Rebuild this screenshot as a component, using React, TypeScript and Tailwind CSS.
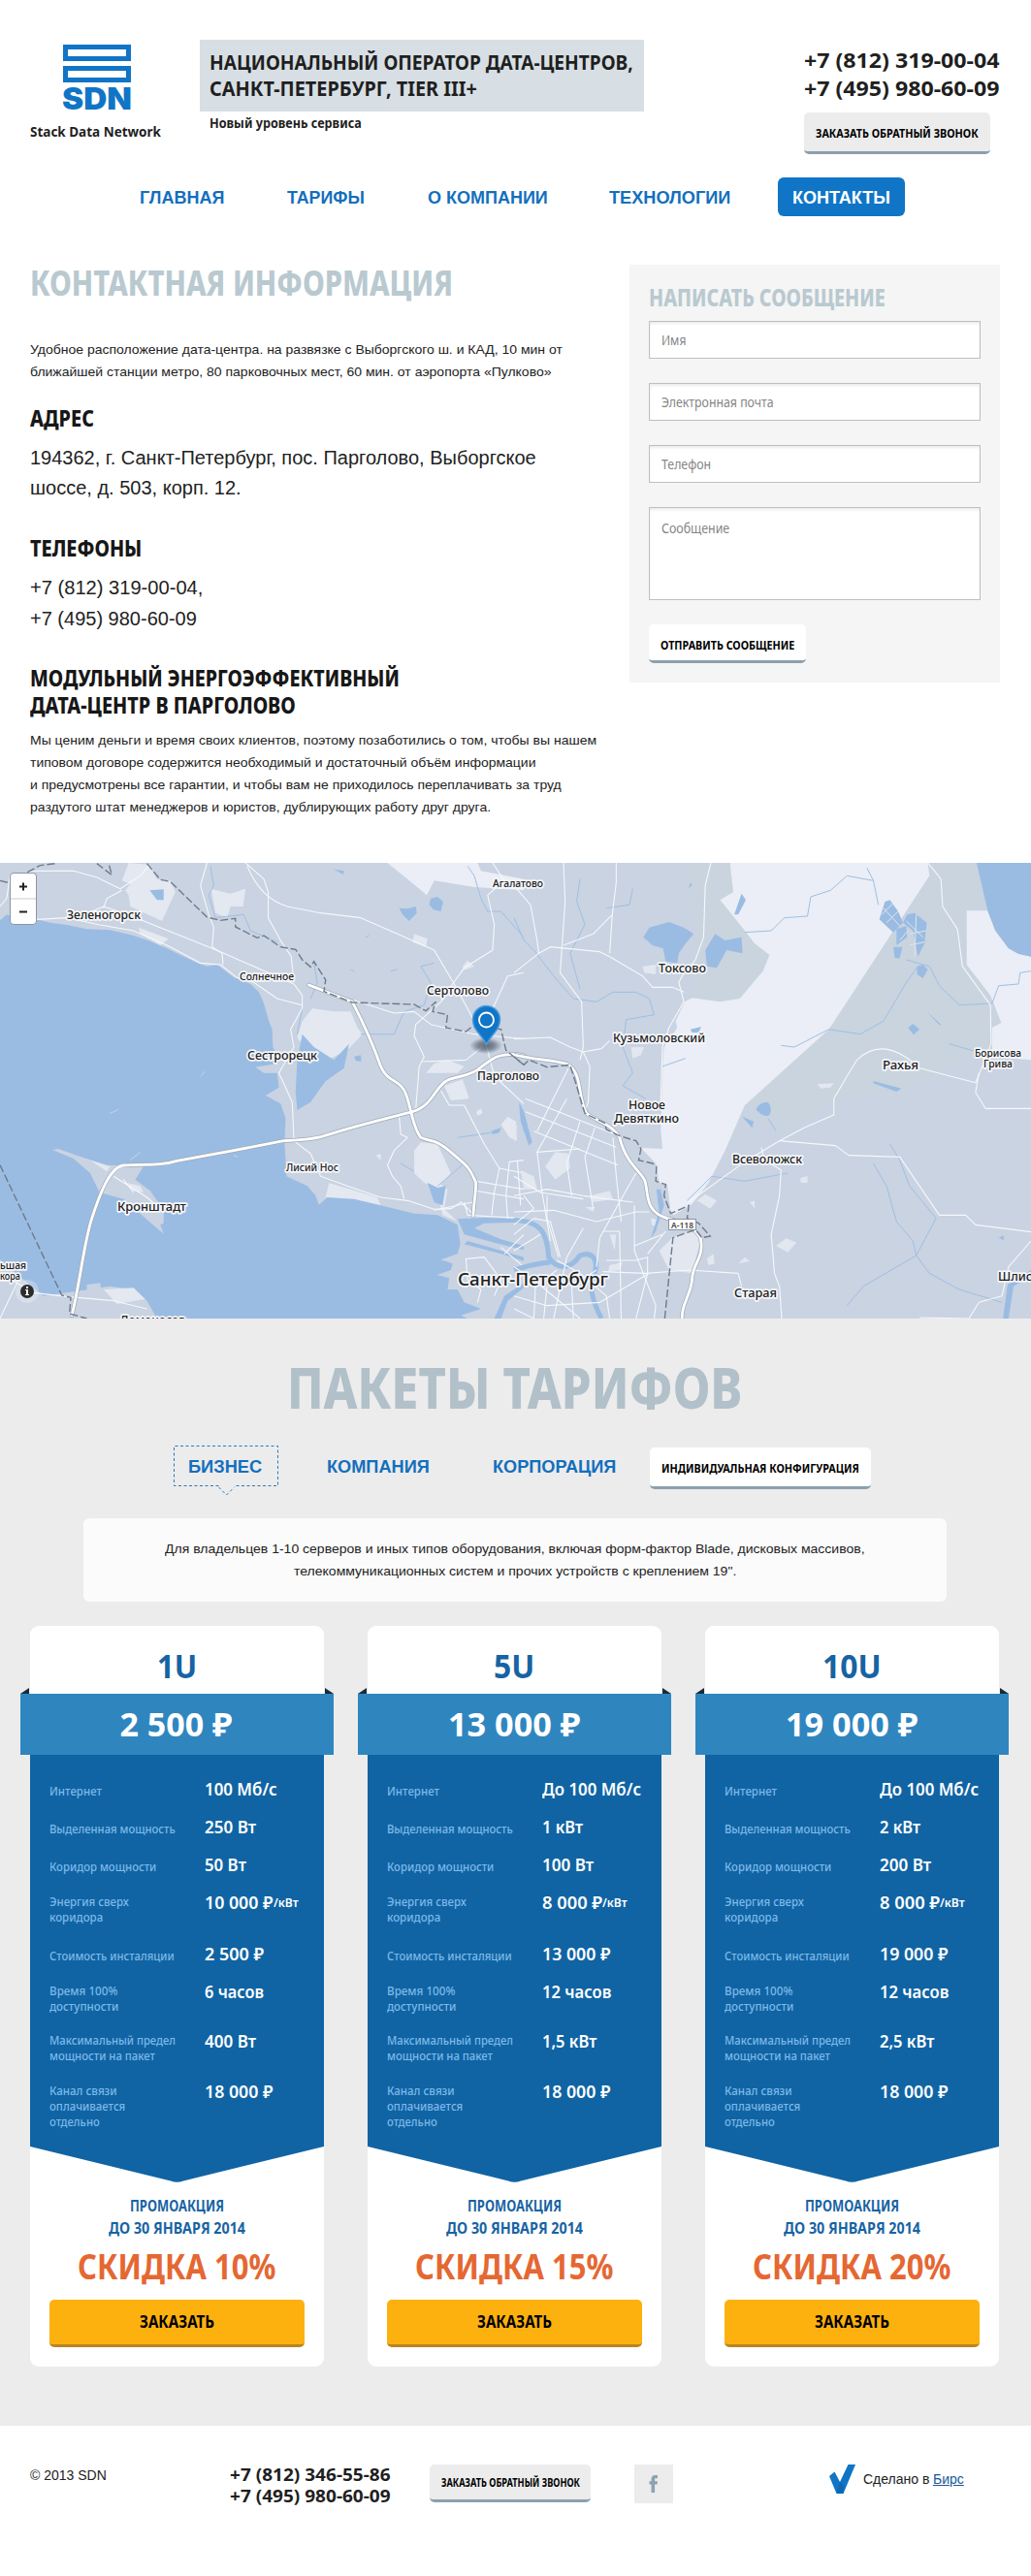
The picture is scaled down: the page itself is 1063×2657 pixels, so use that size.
import { useLayoutEffect, useRef, useState, type ReactNode } from "react";

/* One line of text condensed or stretched to a given width. */
function Fit({ w, className = "", children }: { w: number; className?: string; children: ReactNode }) {
  const ref = useRef<HTMLSpanElement>(null);
  const [k, setK] = useState(1);
  useLayoutEffect(() => {
    if (ref.current) setK(w / ref.current.offsetWidth);
  }, [w]);
  return (
    <span className={`inline-block whitespace-nowrap text-left align-top ${className}`} style={{ width: w }}>
      <span ref={ref} className="block w-max origin-left" style={{ transform: `scaleX(${k})` }}>
        {children}
      </span>
    </span>
  );
}

function Lines({ items, className = "" }: { items: [string, number][]; className?: string }) {
  return (
    <div className={`flex flex-col ${className}`}>
      {items.map(([t, w]) => (
        <Fit key={t} w={w}>{t}</Fit>
      ))}
    </div>
  );
}

const pt = "font-['Noto_Sans',sans-serif]";

function Header() {
  return (
    <header className={`flex h-[183px] items-start pl-[31px] pr-[32px] ${pt} text-[#1f1f1f]`}>
      <div className="w-[135px] pt-[46px]">
        <svg className="ml-[34px] block overflow-visible" width="70" height="67" viewBox="0 0 70 67">
          <path fill="none" stroke="#1075c6" strokeWidth="5" d="M2.5 2.5h65v12h-65zM2.5 24.5h65v12h-65z" />
          <text x="-1" y="66.8" fontFamily="Inter" fontWeight="900" fontSize="31" fill="#1075c6" textLength="72" lengthAdjust="spacingAndGlyphs">SDN</text>
        </svg>
        <Fit w={135} className="mt-[12px] text-[15px] font-bold leading-[20px]">Stack Data Network</Fit>
      </div>
      <div className="ml-[40px] mt-[41px] w-[458px]">
        <Lines
          className="h-[74px] bg-[#d7dfe4] pl-[10px] pt-[9px] text-[22px] font-bold leading-[27px]"
          items={[["НАЦИОНАЛЬНЫЙ ОПЕРАТОР ДАТА-ЦЕНТРОВ,", 437], ["САНКТ-ПЕТЕРБУРГ, TIER III+", 276]]}
        />
        <Fit w={157} className="ml-[10px] mt-[2px] text-[14px] font-bold leading-[20px]">Новый уровень сервиса</Fit>
      </div>
      <div className="ml-auto w-[202px] pt-[47px]">
        <Lines
          className="text-[22px] font-bold leading-[29px]"
          items={[["+7 (812) 319-00-04", 201], ["+7 (495) 980-60-09", 201]]}
        />
        <button className="mt-[11px] flex h-[43px] w-[192px] rounded-[5px] border-b-[3px] border-[#8ba0ad] bg-[#ececec] pl-[12px] pt-[11px] text-[13px] font-bold leading-[20px] text-black">
          <Fit w={168}>ЗАКАЗАТЬ ОБРАТНЫЙ ЗВОНОК</Fit>
        </button>
      </div>
    </header>
  );
}

function Nav() {
  return (
    <nav className="flex h-[40px] pl-[144px] font-['Liberation_Sans',Arial,sans-serif] text-[18px] font-bold leading-[42px] text-[#136fbd]">
      <Fit w={87}>ГЛАВНАЯ</Fit>
      <Fit w={80} className="ml-[65px]">ТАРИФЫ</Fit>
      <Fit w={124} className="ml-[65px]">О КОМПАНИИ</Fit>
      <Fit w={125} className="ml-[63px]">ТЕХНОЛОГИИ</Fit>
      <a className="ml-[49px] h-[40px] w-[131px] rounded-[6px] bg-[#1075c6] pl-[15px] text-white">
        <Fit w={101}>КОНТАКТЫ</Fit>
      </a>
    </nav>
  );
}

function Contacts() {
  const arial = "font-['Liberation_Sans',Arial,sans-serif] text-[#222]";
  const h2 = `${pt} relative top-px text-[22.5px] font-extrabold leading-[27.7px] text-[#171717]`;
  const field = "mb-[25px] h-[39px] w-[342px] border border-[#bfbfbf] bg-white pl-[12px] pt-[9px] text-[14px] leading-[20px] text-[#858585] shadow-[inset_0_2px_3px_rgba(0,0,0,0.08)]";
  return (
    <main className="flex h-[667px] items-start justify-between pl-[31px] pr-[32px] pt-[50px]">
      <div className="-mt-[2px]">
        <h1 className={`${pt} text-[35.5px] font-extrabold leading-[40px] text-[#b9c9d0]`}>
          <Fit w={436}>КОНТАКТНАЯ ИНФОРМАЦИЯ</Fit>
        </h1>
        <Lines
          className={`${arial} mt-[38px] text-[13.5px] leading-[23px]`}
          items={[
            ["Удобное расположение дата-центра. на развязке с Выборгского ш. и КАД, 10 мин от", 549],
            ["ближайшей станции метро, 80 парковочных мест, 60 мин. от аэропорта «Пулково»", 537],
          ]}
        />
        <h2 className={`${h2} mt-[22px]`}><Fit w={66}>АДРЕС</Fit></h2>
        <Lines
          className={`${arial} mt-[12px] text-[20px] leading-[31.7px]`}
          items={[["194362, г. Санкт-Петербург, пос. Парголово, Выборгское", 522], ["шоссе, д. 503, корп. 12.", 218]]}
        />
        <h2 className={`${h2} mt-[31px]`}><Fit w={115}>ТЕЛЕФОНЫ</Fit></h2>
        <Lines
          className={`${arial} mt-[12px] text-[20px] leading-[31.7px]`}
          items={[["+7 (812) 319-00-04,", 178], ["+7 (495) 980-60-09", 172]]}
        />
        <h2 className={`${h2} mt-[31px]`}>
          <Lines items={[["МОДУЛЬНЫЙ ЭНЕРГОЭФФЕКТИВНЫЙ", 381], ["ДАТА-ЦЕНТР В ПАРГОЛОВО", 274]]} />
        </h2>
        <Lines
          className={`${arial} mt-[11px] text-[13.5px] leading-[23px]`}
          items={[
            ["Мы ценим деньги и время своих клиентов, поэтому позаботились о том, чтобы вы нашем", 584],
            ["типовом договоре содержится необходимый и достаточный объём информации", 522],
            ["и предусмотрены все гарантии, и чтобы вам не приходилось переплачивать за труд", 548],
            ["раздутого штат менеджеров и юристов, дублирующих работу друг друга.", 475],
          ]}
        />
      </div>
      <form className={`h-[431px] w-[382px] bg-[#f5f5f5] pl-[20px] pt-[16px] ${pt}`}>
        <h3 className="mb-[8px] h-[34px] text-[24px] font-extrabold leading-[35px] text-[#b9c9d0]">
          <Fit w={244}>НАПИСАТЬ СООБЩЕНИЕ</Fit>
        </h3>
        <div className={field}><Fit w={25}>Имя</Fit></div>
        <div className={field}><Fit w={116}>Электронная почта</Fit></div>
        <div className={field}><Fit w={51}>Телефон</Fit></div>
        <div className={`${field} min-h-[96px] pt-[11px]`}><Fit w={70}>Сообщение</Fit></div>
        <button type="button" className="flex h-[40px] w-[162px] rounded-[5px] border-b-[3px] border-[#8ba0ad] bg-white pl-[12px] pt-[11px] text-[13px] font-bold leading-[20px] text-black">
          <Fit w={138}>ОТПРАВИТЬ СООБЩЕНИЕ</Fit>
        </button>
      </form>
    </main>
  );
}

function Label({ x, y, w, s, children }: { x: number; y: number; w: number; s: number; children: string }) {
  return (
    <text x={x} y={y} fontSize={s} textLength={w} lengthAdjust="spacingAndGlyphs" fontFamily="Noto Sans" fontWeight="500" fill="#222" stroke="#f4f6fa" strokeWidth="3.5" strokeLinejoin="round" paintOrder="stroke">
      {children}
    </text>
  );
}

const roadsWest = [
  "M0,165 L20,140 L30,70 L110,55 L220,55 L290,75 L360,110 L420,70 L445,40",
  "M110,205 L200,200 L300,222 L400,240 L500,285 L600,340 L660,345 L710,385 L760,400 L830,450 L905,470",
  "M240,195 L310,165 L370,185 L540,255 L660,305 L880,405 L905,440",
  "M620,30 L600,100 L625,190 L640,230 L635,290 L665,310 L668,345",
  "M365,115 L320,140 L310,170",
  "M735,30 L790,80 L803,120 L803,200 L840,270 L872,320 L880,400",
  "M740,40 Q780,140 860,165 L960,185 L1080,200 L1180,245 L1300,300 L1320,335 L1360,405 L1410,500 L1455,590",
  "M1475,30 L1510,85 L1460,130 L1480,220 L1475,300 L1390,355 L1355,405 L1320,460 L1245,530 L1240,565 L1270,630 L1255,660 L1245,790",
  "M1568,370 L1520,380 L1480,470 L1455,590 L1395,640 L1265,645",
  "M1060,455 L1180,495 L1240,490 L1290,530 L1420,560 L1568,575",
  "M905,440 L905,480 L870,545 L880,600 L835,680 L875,770 L880,890 L930,930 L960,1000 L1040,1030 L1140,1065 L1220,1075 L1300,1102 L1350,1100 L1380,1080 L1415,1115",
  "M1195,815 L1200,870 L1220,880 L1180,920 L1160,965 L1175,1000 L1200,1030 L1210,1070",
  "M1455,590 L1480,690 L1568,775",
  "M1320,735 L1345,780 L1390,780 L1450,900 L1495,975 L1568,990",
  "M1495,975 L1480,1050 L1472,1120 M1525,955 L1515,1060 L1520,1130 M1425,1015 L1568,1040 M1425,1045 L1568,1070 M1525,955 L1568,950",
  "M1300,1105 L1415,1080 M1390,1080 L1400,1120 L1568,1130",
  "M340,1000 L440,1065 L490,1110 M370,1010 L400,1050",
  "M0,1300 L100,1360 L200,1372 L340,1385 L440,1410 M60,1310 L0,1440",
  "M1395,1255 L1400,1320 L1440,1350 L1430,1390 M1395,1255 L1450,1250 L1500,1320 L1480,1370 M1500,1220 L1568,1280 M1568,1180 L1510,1240",
];
const roadsEast = [
  "M150,30 L155,150 L140,370 L205,460 L210,600 L200,640",
  "M0,100 L50,160 L70,270 L75,310 L0,370 M75,310 L110,290 L260,305 L290,320 L390,380 L420,415 L480,415 L515,430",
  "M310,30 L310,90 L298,190 L290,310 M298,190 L240,250 L150,285",
  "M597,30 L580,100 L575,260 L550,330 L510,380 L500,400 L515,460 L470,540 L450,600 L445,770",
  "M0,575 L110,570 L170,600 L210,615 L265,605 L290,580",
  "M170,655 L70,860 M210,615 L230,660 L225,770 L215,800",
  "M1255,30 L1295,80 L1300,165 L1345,235 L1360,350 L1445,470 L1447,590 L1420,660 L1400,710 L1230,665 Q1120,560 1040,640 L1010,690 L970,760 L970,810 L880,850 L805,890 L700,955 L530,1080",
  "M1410,680 L1400,740 L1430,790 L1568,790",
  "M805,890 L975,905 L1015,935 L1170,940 L1290,1120 L1370,1120 L1400,1150 L1568,1172",
  "M750,910 L760,950 L810,980 L805,1060 L780,1180 L790,1300 L805,1340 L812,1440",
  "M1568,1200 L1500,1280 L1480,1370 L1410,1390 L1380,1440 L1230,1437",
  "M270,1295 L400,1300 L530,1290 L680,1300 L690,1340",
];
const cityGrid = [
  "M35,760 L330,880 M35,800 L310,910 M60,860 L315,965 M70,925 L200,915 M0,1000 L80,1050 L210,1070",
  "M160,760 L70,925 L85,1050 L110,1200 M200,830 L160,960 L175,1060 M245,850 L215,940 L240,1100 M300,880 L310,1000 L325,1140",
  "M0,1060 L100,1040 L210,1060 L360,1080 M370,990 L320,1080 L260,1190 L250,1280 M0,1110 L120,1105 L250,1140 L370,1110 L410,1110",
  "M365,1090 L365,1230 L430,1400 L425,1440 M270,1170 L320,1170 L325,1440 M210,1160 L160,1250 L120,1440",
  "M405,1240 L460,1170 M365,1215 L450,1180 M0,1180 L60,1130 L110,1140 L140,1250 M0,1230 L80,1180",
  "M60,1440 L65,1340 L130,1290 M90,1440 L100,1340 M0,1370 L100,1400 L260,1390 L410,1300 M180,1440 L175,1340 L250,1290 M0,1410 L60,1440",
  "M280,1260 L370,1260 L405,1250 L405,1300 L370,1440 M100,1060 L100,1130 L135,1250 M30,1060 L60,1100 L0,1150 M10,950 L20,1090",
  "M0,1280 L60,1320 L130,1380 L200,1440 M130,1260 L200,1300 L280,1370 L290,1440",
];

function MapView() {
  return (
    <section className="relative h-[470px] overflow-hidden">
      <svg className="block" width="1063" height="470" viewBox="0 0 1063 470">
        <defs>
          <radialGradient id="pinShadow">
            <stop offset="0" stopColor="#4b5563" stopOpacity="0.85" />
            <stop offset="0.5" stopColor="#4b5563" stopOpacity="0.6" />
            <stop offset="1" stopColor="#4b5563" stopOpacity="0" />
          </radialGradient>
        </defs>
        <rect width="1063" height="470" fill="#c9d3e2" />
        <g transform="translate(0,-10) scale(0.34436,0.33333)">
          <g fill="#e3e8f1">
            <path d="M1160,30 L1220,80 L1278,130 L1300,85 L1420,105 L1568,115 L1568,80 L1440,55 L1430,30Z" fill="#ebeef6" />
            <path d="M385,30 L445,35 L470,80 L510,85 L525,120 L485,210 L390,165 L385,130 L375,115 L390,95 L365,85Z" />
            <path d="M632,110 L690,125 L735,110 L728,165 L690,165 L680,200 L645,185Z" />
            <path d="M415,230 L505,265 L480,285 L420,250Z M1240,250 L1280,265 L1275,290 L1235,275Z M1385,350 L1400,332 L1420,350 L1390,362Z" />
            <path d="M905,520 L935,480 L1000,490 L1050,490 L1070,540 L1085,560 L1040,610 L980,640 L910,600 L890,570Z" />
            <path d="M1330,720 L1385,700 L1405,760 L1350,765Z M1300,650 L1340,640 L1390,660 L1370,680 L1275,680Z" />
            <path d="M1240,920 L1260,895 L1310,900 L1350,990 L1310,1035 L1270,1020 L1240,990Z M1500,840 L1520,815 L1545,830 L1548,890 L1525,880Z" />
            <path d="M985,1020 L1130,1065 L1140,1090 L975,1065Z M1425,800 L1440,790 L1445,805 L1430,812Z M1125,935 L1140,930 L1140,950Z M1300,1010 L1340,1040 L1330,1100 L1370,1140 L1325,1120Z" />
          </g>
          <path fill="#9abce3" d="M0,208 L20,190 L45,200 L110,205 L150,215 L200,222 L260,235 L330,238 L400,255 L450,272 L500,295 L540,315 L590,340 L620,350 L650,345 L700,385 L750,405 L775,430 L790,465 L805,520 L815,545 L817,600 L830,625 L835,650 L765,662 L790,680 L830,680 L835,725 L795,750 L840,775 L855,820 L852,900 L858,1000 L920,1030 L945,1060 L955,1088 L980,1065 L1060,1070 L1140,1090 L1240,1115 L1310,1120 L1370,1150 L1378,1210 L1370,1240 L1320,1258 L1355,1270 L1350,1290 L1308,1305 L1345,1315 L1340,1350 L1370,1350 L1390,1390 L1440,1410 L1380,1430 L1400,1440 L470,1440 L440,1385 L400,1350 L330,1340 L200,1360 L130,1370 L60,1310 L0,1258Z" />
          <path fill="#9abce3" d="M905,560 L940,600 L1000,640 L1045,590 L1030,665 L975,705 L930,770 L890,795 L885,740 L890,640Z M1280,1020 L1310,1035 L1335,1030 L1325,1090 L1300,1080Z M1290,140 L1310,135 L1327,150 L1320,180 L1298,175 L1285,160Z M1195,170 L1220,172 L1245,165 L1248,185 L1225,210 L1205,190Z M448,115 L490,112 L490,145 L470,145Z M1000,50 L1030,55 L1028,66Z M1060,630 L1080,625 L1082,645 L1065,642Z M1470,860 L1500,850 L1495,865 L1475,870Z M1555,770 L1568,800 V860Z" />
          <path fill="#c9d3e2" d="M157,918 L175,915 L230,935 L320,965 L430,968 L405,1010 L450,1045 L490,1105 L490,1145 L480,1150 L490,1178 L430,1125 L370,1070 L298,1050 L270,990 L220,945Z M260,1335 L300,1330 L305,1370 L260,1370Z" />
          <path fill="#e3e8f1" d="M270,950 L330,970 L320,985Z M380,1020 L420,1030 L430,1050 L400,1045Z M310,1350 L400,1345 L435,1380 L350,1395Z" />
          <path fill="#9abce3" d="M1370,1132 L1450,1128 L1568,1132 V1142 L1450,1145 L1420,1160 L1500,1195 L1568,1215 V1228 L1480,1205 L1390,1180Z M1400,1200 L1568,1250 V1262 L1500,1240 L1390,1210Z M1480,1440 L1510,1370 L1568,1330 V1345 L1520,1385 L1500,1440Z" />
          <g fill="none" stroke="#a0bfe3" strokeWidth="1" className="[&>path]:[vector-effect:non-scaling-stroke]">
            <path d="M630,40 L640,100 L625,130 L645,200 L730,190 L750,240 L830,275 M1400,40 L1420,70 L1440,140 L1460,180 L1500,180 L1568,260 M905,480 L890,560 M1300,340 L1260,350 L1290,400 L1270,470 L1210,490 L1180,560 L1080,560 M940,340 L950,400 L930,450 M1200,960 L1240,985 M1390,960 L1310,1030 M1370,880 L1470,865" />
            <path d="M1050,360 L1060,365 M1170,365 L1190,360 M1095,260 L1105,255" />
          </g>
          <path fill="none" stroke="#c9d3e2" strokeWidth="1" className="[vector-effect:non-scaling-stroke]" d="M600,690 L615,675 M330,805 L355,793 M390,950 L420,925 M700,935 L712,940" />
          <g fill="none" stroke="#f6f8fb" strokeWidth="1.1" strokeLinejoin="round" className="[&>path]:[vector-effect:non-scaling-stroke]">
            {roadsWest.map((d) => <path key={d} d={d} />)}
          </g>
          <g fill="none" strokeLinejoin="round" strokeLinecap="round" className="[&>path]:[vector-effect:non-scaling-stroke]">
            {["#9fa9b6", "#ffffff"].map((c, i) => (
              <path key={c} stroke={c} strokeWidth={i ? 2.8 : 4.2} d="M215,1430 C240,1330 250,1210 275,1130 C300,1050 330,970 370,966 C440,962 480,968 530,952 L700,920 L850,890 C900,885 930,890 980,872 C1060,845 1160,820 1235,800 C1300,780 1300,720 1345,700 C1390,685 1400,690 1430,670 C1480,630 1490,622 1545,622 L1568,626 M925,408 L1055,460 C1100,550 1120,600 1140,660 C1160,710 1200,700 1215,745 C1230,780 1235,850 1260,880 C1290,895 1300,880 1350,925 C1400,970 1405,970 1425,1020 C1425,1060 1418,1080 1417,1122" />
            ))}
          </g>
          <path fill="none" stroke="#6f7a8a" strokeWidth="1.4" strokeDasharray="8 3" className="[vector-effect:non-scaling-stroke]" d="M0,85 L40,95 L80,60 L120,38 L165,32 M290,32 L335,68 L325,30 M440,32 L480,82 L510,88 L620,198 L660,208 L705,202 L705,228 L770,262 L790,255 L840,290 L885,298 L905,330 L930,352 L940,335 L975,392 L970,428 L1055,462 L1240,468 L1275,488 L1305,460 L1295,490 L1340,500 L1335,540 L1395,552 L1415,535 L1500,545 L1515,610 L1568,655 M0,965 L185,1368 L212,1375 L208,1425 L260,1440" />
        </g>
        <g transform="translate(530,-10) scale(0.33992,0.33333)">
          <path fill="#c9d4df" d="M515,30 L655,30 L700,240 L775,315 L685,450 L540,448 L560,300Z M1260,30 H1403 L1437,180 L1373,178 V345 L1445,440 L1478,525 L1447,545 L1447,610 L1395,620 L1200,720 L970,760 L860,850 L700,780 L955,545Z" />
          <path fill="#ebeef6" d="M655,30 L665,120 L625,145 L700,240 L730,280 L775,315 L755,365 L742,380 L685,450 L625,460 L540,448 L518,460 L490,520 L495,540 L455,600 L452,640 L445,855 L450,915 L385,912 L430,960 L440,1020 L465,1025 L475,1110 L485,1120 L540,1085 L590,1020 L640,920 L700,780 L955,545 L1260,70 L1255,30Z M1373,178 H1437 L1460,240 L1500,295 L1568,320 V640 L1450,630 V540 L1478,525 L1445,440 L1373,345Z" />
          <g fill="#e2e7f0">
            <path d="M390,350 L430,345 L430,375 L395,370Z M355,600 L395,600 L385,625 L360,635Z M95,970 L125,925 L165,930 L170,975 L125,1010Z M230,1060 L290,1045 L300,1070 L240,1080Z M480,1190 L545,1165 L565,1200 L540,1300 L470,1290 L440,1230Z M555,1075 L580,1055 L615,1075 L595,1100Z M795,1215 L825,1192 L857,1205 L830,1235Z M868,1005 L890,1000 L890,1020 L870,1020Z M585,1255 L605,1240 L608,1270 L590,1275Z M715,1080 L730,1075 L730,1100Z M920,715 L970,712 L960,725 L930,728Z M290,1180 L310,1180 L305,1230Z M20,980 L60,1000 L70,1040 L30,1040Z M290,1275 L330,1265 L320,1290 L285,1295Z M0,860 L10,840 L0,900Z M215,1095 L245,1095 L240,1110Z M680,1270 L700,1250 L715,1262Z M415,1130 L440,1135 L435,1160 L418,1150Z" />
          </g>
          <g fill="#9abce3">
            <path d="M1403,30 L1437,180 L1460,240 L1500,295 L1530,312 L1568,320 V30Z M392,260 L410,230 L470,213 L515,230 L545,250 L520,280 L500,310 L495,340 L460,335 L452,295 L420,285Z M585,350 L580,300 L610,250 L640,270 L690,260 L693,310 L645,300 L615,355Z M668,190 L690,125 L703,145 L680,190Z M520,60 L535,90 L530,108 L540,100Z M535,545 L568,537 L560,555 L540,555Z M1222,350 L1240,345 L1255,360 L1240,387 L1222,375Z M1195,540 L1210,528 L1230,545 L1212,562Z M735,790 Q745,770 770,770 Q785,790 775,810 Q760,820 735,795Z M692,815 L727,830 L722,850Z M1125,150 L1140,145 L1165,180 L1180,215 L1150,245 L1108,205Z M1160,235 L1190,225 L1192,260 L1160,285Z M1192,190 L1215,185 L1252,215 L1245,280 L1225,320 L1210,240 L1180,215Z M1150,290 L1178,290 L1170,325 L1155,325Z M1090,705 L1125,715 L1175,728 L1160,738 L1090,712Z M15,775 L30,800 L55,895 L45,905 L20,830Z M432,1040 L445,1040 L455,1090 L430,1170 L415,1190 L440,1110Z M1497,1335 L1568,1290 V1310 L1515,1340 L1500,1440 H1483Z M1470,1190 L1485,1183 L1485,1197Z M1250,488 L1295,530 L1290,532Z" />
          </g>
          <path fill="none" stroke="#dfe5ee" strokeWidth="1" className="[vector-effect:non-scaling-stroke]" d="M1115,190 L1150,155 M1130,215 L1165,180 M1120,170 L1170,225 M1170,270 L1195,240 M1200,250 L1250,240 M1190,210 L1240,260 M1220,190 L1215,320 M1200,285 L1245,275" />
          <g fill="none" stroke="#9fbfe4" strokeWidth="1" className="[&>path]:[vector-effect:non-scaling-stroke]">
            <path d="M700,245 L780,240 L820,200 L890,195 L900,135 L960,115 L1010,70 L1090,85 L1070,45 M1105,160 L1090,85 M0,200 L30,270 L60,300 L120,380 L180,450 L250,460 L300,430 L370,430 L410,450 L425,500 L340,515 L330,600 L360,680 L330,720 L400,760 M200,80 L190,150 L215,220 L170,310 L200,420 M810,595 L850,600 L955,545 L1050,560 L1120,520 L1190,400 L1225,350 M1190,330 L1260,350 L1290,410 L1350,470 L1450,465 L1470,410 L1530,405 L1535,370 L1568,365 M450,660 L520,635 M525,1075 L600,1000 L700,1015 L830,990 M1090,960 L1130,1030 L1160,1140 L1210,1200 L1220,1245 L1110,1310 L1060,1340 L1010,1400 M1140,900 L1170,950 L1200,1030 L1280,1130 L1220,1245 L1260,1300 L1350,1350 L1480,1390 M1320,590 L1395,612 M770,820 L795,860 M360,110 L350,160 L280,170" />
          </g>
          <path fill="none" stroke="#9abce3" strokeWidth="5" className="[vector-effect:non-scaling-stroke]" d="M0,1135 C80,1140 100,1170 105,1250 C130,1290 170,1290 200,1245 C240,1230 255,1260 245,1300 C230,1340 230,1370 265,1440 M0,1290 C60,1270 80,1270 110,1265" />
          <g fill="none" stroke="#f6f8fb" strokeWidth="1.1" strokeLinejoin="round" className="[&>path]:[vector-effect:non-scaling-stroke]">
            {roadsEast.map((d) => <path key={d} d={d} />)}
            {cityGrid.map((d) => <path key={d} d={d} />)}
          </g>
          <g fill="none" strokeLinejoin="round" className="[&>path]:[vector-effect:non-scaling-stroke]">
            {["#9fa9b6", "#ffffff"].map((c, i) => (
              <path key={c} stroke={c} strokeWidth={i ? 2.8 : 4.2} d="M0,624 C70,640 120,640 160,652 C210,680 190,750 220,805 C250,830 300,840 320,880 C340,960 380,980 395,1010 C410,1040 390,1110 465,1130 C530,1145 555,1170 565,1190 C580,1250 540,1270 540,1320 C535,1370 505,1400 510,1440" />
            ))}
          </g>
          <path fill="none" stroke="#6f7a8a" strokeWidth="1.4" strokeDasharray="8 3" className="[vector-effect:non-scaling-stroke]" d="M0,630 L30,655 L45,640 L100,662 L170,655 L215,805 L275,835 L280,855 L320,875 L370,890 L385,915 L378,950 L420,960 L432,970 L430,1015 L460,1025 L455,1060 L475,1115 L530,1090 L525,1130 L560,1145 L595,1185 L570,1190 L550,1165 L482,1190 L457,1440" />
        </g>
        <ellipse cx="501" cy="188.5" rx="17" ry="8.5" fill="url(#pinShadow)" />
        <path d="M501.5 187.5 C497 177 487.5 173 487.5 161.5 A14 14 0 0 1 515.5 161.5 C515.5 173 506 177 501.5 187.5Z" fill="#1075c6" stroke="#4c9bdc" strokeWidth="1.5" />
        <circle cx="501.5" cy="162" r="7.5" fill="none" stroke="#fff" strokeWidth="1.8" />
        <Label x={69} y={58} w={76} s={12.5}>Зеленогорск</Label>
        <Label x={247} y={121} w={56} s={10.5}>Солнечное</Label>
        <Label x={508} y={25} w={52} s={10.5}>Агалатово</Label>
        <Label x={440} y={136} w={64} s={12.5}>Сертолово</Label>
        <Label x={255} y={203} w={72} s={12.5}>Сестрорецк</Label>
        <Label x={492} y={224} w={64} s={12.5}>Парголово</Label>
        <Label x={295} y={318} w={54} s={10.5}>Лисий Нос</Label>
        <Label x={121} y={359} w={71} s={12.5}>Кронштадт</Label>
        <Label x={679} y={113} w={49} s={12.5}>Токсово</Label>
        <Label x={632} y={185} w={95} s={12.5}>Кузьмоловский</Label>
        <Label x={648} y={254} w={38} s={12.5}>Новое</Label>
        <Label x={633} y={268} w={67} s={12.5}>Девяткино</Label>
        <Label x={755} y={310} w={72} s={12.5}>Всеволожск</Label>
        <Label x={910} y={213} w={37} s={12.5}>Рахья</Label>
        <Label x={1005} y={200} w={48} s={10.5}>Борисова</Label>
        <Label x={1014} y={211} w={30} s={10.5}>Грива</Label>
        <Label x={757} y={448} w={44} s={12.5}>Старая</Label>
        <Label x={1029} y={431} w={35} s={12.5}>Шлис</Label>
        <Label x={472} y={436} w={155} s={18.5}>Санкт-Петербург</Label>
        <Label x={0} y={419} w={27} s={10.5}>ьшая</Label>
        <Label x={0} y={430} w={21} s={10.5}>кора</Label>
        <Label x={124} y={476} w={67} s={12.5}>Ломоносов</Label>
        <rect x="689.5" y="367.5" width="28" height="11" fill="#fff" stroke="#8b94a0" />
        <text x="692" y="376.5" fontFamily="Noto Sans" fontSize="8.5" fontWeight="600" fill="#444" textLength="23" lengthAdjust="spacingAndGlyphs">А-118</text>
        <circle cx="28" cy="442" r="12" fill="#fff" opacity="0.25" />
        <circle cx="28" cy="442" r="7" fill="#2d2d2d" />
        <rect x="27" y="437" width="2" height="2" fill="#fff" />
        <rect x="27" y="440" width="2" height="6" fill="#fff" />
        <rect x="26" y="440" width="2" height="1" fill="#fff" />
        <rect x="26" y="445" width="4" height="1" fill="#fff" />
      </svg>
      <div className="absolute left-[10px] top-[10px] h-[54px] w-[28px] rounded-[4px] border border-[#8d96a1] bg-white">
        <svg width="26" height="52" viewBox="0 0 26 52">
          <path d="M0 26h26" stroke="#ccc" />
          <path d="M9 13.5h8M13 9.5v8M9 39.5h8" stroke="#222" strokeWidth="2" />
        </svg>
      </div>
    </section>
  );
}

type Plan = { name: [string, number]; price: [string, number]; values: [string, number][]; sale: string };

const labels: [string, number][][] = [
  [["Интернет", 54]],
  [["Выделенная мощность", 130]],
  [["Коридор мощности", 110]],
  [["Энергия сверх", 82], ["коридора", 55]],
  [["Стоимость инсталяции", 129]],
  [["Время 100%", 70], ["доступности", 71]],
  [["Максимальный предел", 130], ["мощности на пакет", 109]],
  [["Канал связи", 70], ["оплачивается", 78], ["отдельно", 52]],
];
const rowHeights = ["h-[39px]", "h-[39px]", "h-[39px]", "h-[53px]", "h-[39px]", "h-[51px]", "h-[52px]", "h-[48px]"];

const plans: Plan[] = [
  {
    name: ["1U", 41], price: ["2 500 ₽", 116], sale: "СКИДКА 10%",
    values: [["100 Мб/с", 75], ["250 Вт", 53], ["50 Вт", 43], ["10 000 ₽", 71], ["2 500 ₽", 61], ["6 часов", 61], ["400 Вт", 53], ["18 000 ₽", 71]],
  },
  {
    name: ["5U", 42], price: ["13 000 ₽", 136], sale: "СКИДКА 15%",
    values: [["До 100 Мб/с", 102], ["1 кВт", 42], ["100 Вт", 53], ["8 000 ₽", 62], ["13 000 ₽", 71], ["12 часов", 71], ["1,5 кВт", 56], ["18 000 ₽", 71]],
  },
  {
    name: ["10U", 61], price: ["19 000 ₽", 136], sale: "СКИДКА 20%",
    values: [["До 100 Мб/с", 102], ["2 кВт", 42], ["200 Вт", 53], ["8 000 ₽", 62], ["19 000 ₽", 71], ["12 часов", 71], ["2,5 кВт", 56], ["18 000 ₽", 71]],
  },
];

function Card({ plan }: { plan: Plan }) {
  return (
    <article className="h-[764px] w-[303px] rounded-[9px] bg-white">
      <div className="h-[70px] pt-[19px] text-center text-[34px] font-bold leading-[44px] text-[#1763a3]">
        <Fit w={plan.name[1]} className="-ml-px">{plan.name[0]}</Fit>
      </div>
      <div className="relative -mx-[10px] h-[63px] bg-[#2f86bf] text-center text-[34px] font-bold leading-[62px] text-white">
        <svg className="absolute -top-[6px] left-0" width="9" height="6"><path d="M0 6L9 0V6Z" fill="#152d3d" /></svg>
        <svg className="absolute -top-[6px] right-0" width="9" height="6"><path d="M9 6L0 0V6Z" fill="#152d3d" /></svg>
        <Fit w={plan.price[1]} className="-ml-[2px]">{plan.price[0]}</Fit>
      </div>
      <div className="h-[404px] bg-[#1064a4] pl-[20px] pt-[27px]">
        {labels.map((l, i) => (
          <div key={i} className={`flex items-start ${rowHeights[i]}`}>
            <Lines
              items={l}
              className={`w-[160px] text-[13px] font-medium leading-[16px] text-[#7cb9e8] ${l.length === 1 ? "pt-[2px]" : "-mt-px"}`}
            />
            <div className="flex text-[18px] font-semibold leading-[16px] text-white">
              <Fit w={plan.values[i][1]}>{plan.values[i][0]}</Fit>
              {i === 3 && <Fit w={26} className="text-[13px]">/кВт</Fit>}
            </div>
          </div>
        ))}
      </div>
      <svg className="block" width="303" height="37" viewBox="0 0 303 37">
        <path d="M0 0H303L158 35.5Q151.5 38 145 35.5Z" fill="#1064a4" />
      </svg>
      <Lines
        className="mt-[13px] items-center text-[16px] font-bold leading-[23.3px] text-[#1763a3]"
        items={[["ПРОМОАКЦИЯ", 97], ["ДО 30 ЯНВАРЯ 2014", 141]]}
      />
      <div className="mt-[4px] text-center text-[36px] font-bold leading-[45px] text-[#e56732]">
        <Fit w={204} className="-ml-[2px]">{plan.sale}</Fit>
      </div>
      <button className="mx-[20px] mt-[12px] block h-[49px] w-[263px] rounded-[5px] border-b-[3px] border-[#bb8420] bg-[#fdb10f] text-[18px] font-bold leading-[43px] text-black">
        <Fit w={77}>ЗАКАЗАТЬ</Fit>
      </button>
    </article>
  );
}

function Packages() {
  return (
    <section className={`h-[1142px] bg-[#ececec] pt-[36px] ${pt}`}>
      <h2 className="text-center text-[58px] font-extrabold leading-[70px] text-[#b1c0c9]"><Fit w={469} className="-ml-[3px]">ПАКЕТЫ ТАРИФОВ</Fit></h2>
      <div className="mt-[25px] flex h-[50px] items-start pl-[179px] font-['Liberation_Sans',Arial,sans-serif] text-[18px] font-bold leading-[44px] text-[#136fbd]">
        <div className="relative h-[50px] w-[108px] pl-[15px]">
          <svg className="absolute left-0 top-0" width="108" height="52" viewBox="0 0 108 52">
            <path d="M46.5 41.5H0.5V0.5H107.5V41.5H62.5M46.5 43L54.5 51L62.5 43" fill="none" stroke="#2b78b8" strokeDasharray="3 2.5" />
          </svg>
          <Fit w={76}>БИЗНЕС</Fit>
        </div>
        <Fit w={106} className="ml-[50px]">КОМПАНИЯ</Fit>
        <Fit w={127} className="ml-[65px]">КОРПОРАЦИЯ</Fit>
        <button className={`ml-[35px] mt-[2px] flex h-[43px] w-[228px] rounded-[5px] border-b-[3px] border-[#8ba0ad] bg-white pl-[12px] pt-[11px] ${pt} text-[13px] leading-[20px] text-black`}>
          <Fit w={204}>ИНДИВИДУАЛЬНАЯ КОНФИГУРАЦИЯ</Fit>
        </button>
      </div>
      <div className="ml-[86px] mt-[25px] h-[86px] w-[890px] rounded-[6px] bg-[#fbfbfb] pt-[20px]">
        <Lines
          className="items-center font-['Liberation_Sans',Arial,sans-serif] text-[13.5px] leading-[23px] text-[#222]"
          items={[
            ["Для владельцев 1-10 серверов и иных типов оборудования, включая форм-фактор Blade, дисковых массивов,", 722],
            ["телекоммуникационных систем и прочих устройств с креплением 19\".", 456],
          ]}
        />
      </div>
      <div className="mt-[25px] flex gap-[45px] pl-[31px]">
        {plans.map((p) => <Card key={p.sale} plan={p} />)}
      </div>
    </section>
  );
}

function Footer() {
  return (
    <footer className="flex h-[155px] items-start bg-white pl-[31px] pt-[38px] font-['Liberation_Sans',Arial,sans-serif] text-[14px] leading-[20px] text-[#222]">
      <Fit w={79} className="mt-[3px]">© 2013 SDN</Fit>
      <Lines
        className={`ml-[127px] mt-px ${pt} text-[18px] font-bold leading-[22.3px] text-[#1f1f1f]`}
        items={[["+7 (812) 346-55-86", 166], ["+7 (495) 980-60-09", 166]]}
      />
      <button className={`ml-[40px] mt-[2px] flex h-[39px] w-[166px] rounded-[5px] border-b-[3px] border-[#8ba0ad] bg-[#ececec] pl-[12px] pt-[9px] ${pt} text-[12px] font-bold text-black`}>
        <Fit w={143}>ЗАКАЗАТЬ ОБРАТНЫЙ ЗВОНОК</Fit>
      </button>
      <div className="ml-[45px] mt-[2px] flex h-[40px] w-[40px] items-center justify-center bg-[#ececec]">
        <svg width="10" height="18" viewBox="0 0 10 18">
          <path d="M2.5 18V9.5H0.5V6.3H2.5V4.2C2.5 1.5 4 0 6.5 0H9V3.2H7.3C6.4 3.2 6.1 3.6 6.1 4.4V6.3H9L8.6 9.5H6.1V18Z" fill="#8ba3b1" />
        </svg>
      </div>
      <svg className="ml-[160px] mt-[2px]" width="29" height="30" viewBox="0 0 29 30">
        <path d="M1 12L6.5 7.5L12 18L20.5 0H28L15.5 30H8.5Z" fill="#1075c6" />
        <path d="M12 18L16 22L15.5 30H8.5Z" fill="#0b5a9f" opacity="0.5" />
      </svg>
      <Fit w={68} className="ml-[7px] mt-[7px]">Сделано в</Fit>
      <a className="ml-[4px] mt-[7px] text-[#20589a]"><Fit w={32}><u>Бирс</u></Fit></a>
    </footer>
  );
}

export default function App() {
  return (
    <div className="h-[2657px] w-[1063px] overflow-hidden bg-white">
      <Header />
      <Nav />
      <Contacts />
      <MapView />
      <Packages />
      <Footer />
    </div>
  );
}
